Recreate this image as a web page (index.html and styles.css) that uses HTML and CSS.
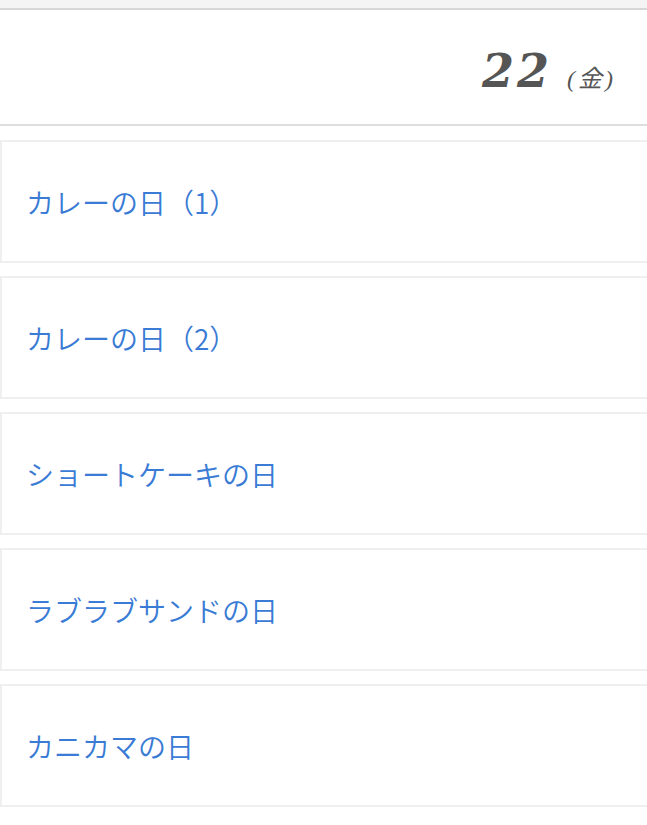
FILE: index.html
```html
<!DOCTYPE html>
<html lang="ja">
<head>
    <meta charset="UTF-8">
    <meta name="viewport" content="width=device-width, initial-scale=1.0">
    <title>22日のイベント</title>
    <link rel="stylesheet" href="styles.css">
</head>
<body>

<div class="topbar"></div>

<div class="day-header">
    <span class="day-num">22</span>
    <span class="day-week">(金)</span>
</div>

<div class="event-list">
    <a class="event-card" href="#">カレーの日（1）</a>
    <a class="event-card" href="#">カレーの日（2）</a>
    <a class="event-card" href="#">ショートケーキの日</a>
    <a class="event-card" href="#">ラブラブサンドの日</a>
    <a class="event-card" href="#">カニカマの日</a>
</div>

</body>
</html>
```

FILE: styles.css
```css
body {
    margin: 0;
    background-color: white;
    font-family: "Noto Sans CJK JP", sans-serif;
}
.topbar {
    height: 8px;
    background-color: #f4f4f4;
    border-bottom: 2px solid #d6d6d6;
}
.day-header {
    height: 116px;
    box-sizing: border-box;
    display: flex;
    justify-content: flex-end;
    align-items: baseline;
    padding: 34px 31px 0 0;
    border-bottom: 2px solid #dedede;
    color: #555;
}
.day-num {
    font-family: "DejaVu Serif", serif;
    font-style: italic;
    font-weight: bold;
    font-size: 46px;
    letter-spacing: 3px;
}
.day-week {
    font-family: "Liberation Serif", "Noto Sans CJK JP", serif;
    font-style: italic;
    font-size: 24px;
    letter-spacing: 3px;
    margin-left: 15px;
}
.event-list {
    padding-top: 14px;
}
.event-card {
    display: flex;
    align-items: center;
    box-sizing: border-box;
    height: 123px;
    margin-bottom: 13px;
    padding-left: 24px;
    border: 2px solid #efefef;
    border-right: none;
    color: #3a7bd5;
    font-size: 28px;
    font-weight: 350;
    text-decoration: none;
}
```
